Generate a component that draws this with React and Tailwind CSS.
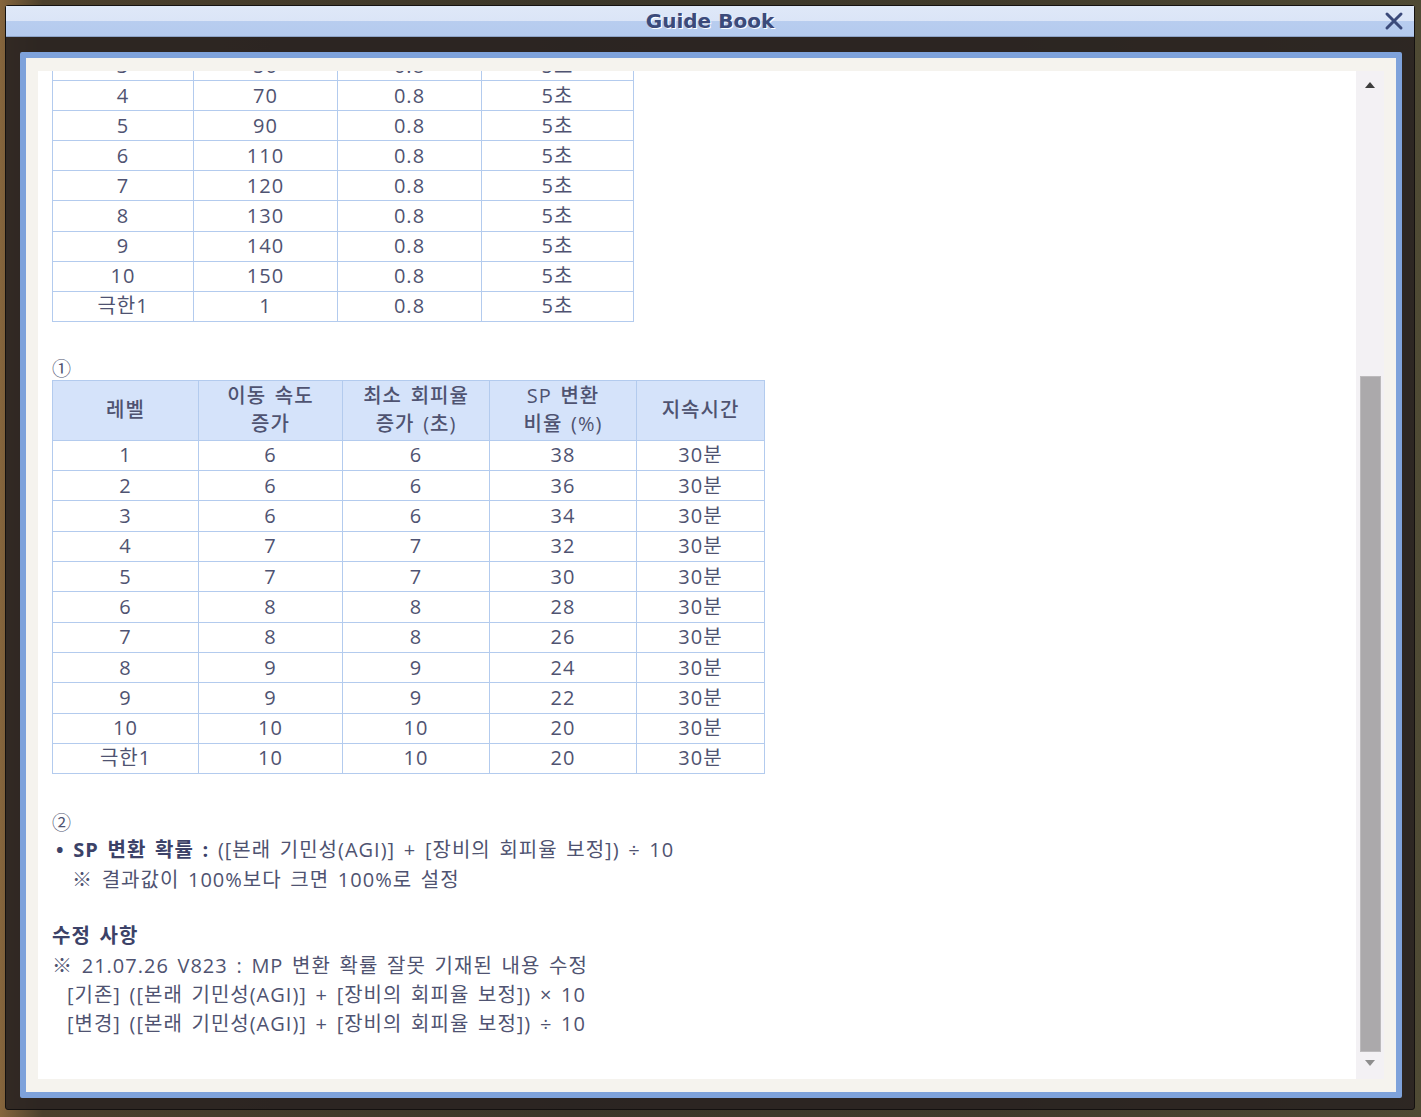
import React from 'react';

// Guide Book window: skill tables with a scrolled content pane

const table1 = [
  ['3', '50', '0.8', '5초'],
  ['4', '70', '0.8', '5초'],
  ['5', '90', '0.8', '5초'],
  ['6', '110', '0.8', '5초'],
  ['7', '120', '0.8', '5초'],
  ['8', '130', '0.8', '5초'],
  ['9', '140', '0.8', '5초'],
  ['10', '150', '0.8', '5초'],
  ['극한1', '1', '0.8', '5초'],
];

const table2 = [
  ['1', '6', '6', '38'],
  ['2', '6', '6', '36'],
  ['3', '6', '6', '34'],
  ['4', '7', '7', '32'],
  ['5', '7', '7', '30'],
  ['6', '8', '8', '28'],
  ['7', '8', '8', '26'],
  ['8', '9', '9', '24'],
  ['9', '9', '9', '22'],
  ['10', '10', '10', '20'],
  ['극한1', '10', '10', '20'],
];

const cell = 'border border-[#b3cbee] text-center align-middle p-0 leading-[24px]';
const head = 'border border-[#b3cbee] text-center align-middle p-0 font-medium leading-[28px]';

function CloseIcon() {
  return (
    <svg width="20" height="20" viewBox="0 0 20 20" fill="none">
      <path d="M3 3 L17 17 M17 3 L3 17" stroke="#3b4a7a" strokeWidth="3" strokeLinecap="round" />
    </svg>
  );
}

function Scrollbar() {
  return (
    <div className="w-[28px] shrink-0 bg-[#f3f1f4] flex flex-col items-center">
      <div className="h-[28px] w-full flex items-center justify-center">
        <div className="w-0 h-0 border-x-[5px] border-x-transparent border-b-[6px] border-b-[#3d3d3d]" />
      </div>
      <div className="h-[277px]" />
      <div className="w-[21px] h-[676px] bg-[#aba9ab] border border-[#bcbabc]" />
      <div className="h-[22px] w-full flex items-center justify-center">
        <div className="w-0 h-0 border-x-[5px] border-x-transparent border-t-[6px] border-t-[#8e8e8e]" />
      </div>
    </div>
  );
}

export default function App() {
  return (
    <div className="w-[1421px] h-[1117px] overflow-hidden pt-[5px] pl-[5px] bg-[linear-gradient(90deg,#86653c_0,#4b3f2c_3%,#3b3629_40%,#403a2b_70%,#4f4a34_100%)] font-['Open_Sans','Noto_Sans_CJK_KR',sans-serif] text-[#4f5371]">
      {/* window frame */}
      <div className="w-[1410px] h-[1105px] flex flex-col bg-[#2a2421]/90 border border-[#141110] rounded-[3px]">
        {/* title bar */}
        <div className="relative h-[31px] shrink-0 bg-[linear-gradient(#dfe8f8_0,#dbe5f7_50%,#b8cdef_50%,#b4caee_100%)] border-b border-[#8ea4c8] flex items-center justify-center">
          <span className="font-['DejaVu_Sans',sans-serif] font-bold text-[20px] text-[#3b4a7a] [text-shadow:1px_1px_0_#ffffff]">
            Guide Book
          </span>
          <div className="absolute right-[10px] top-[5px]">
            <CloseIcon />
          </div>
        </div>

        {/* panel */}
        <div className="mt-[15px] ml-[14px] mr-[12px] h-[1046px] border-[6px] border-[#7ea2db] rounded-[2px] bg-[#f5f3ee] pt-[13px] pl-[12px] pr-[12px] pb-[13px] flex">
          <div className="flex-1 bg-white overflow-hidden pl-[14px] text-[20px] tracking-[1px] [word-spacing:2.5px]">
            {/* table 1, scrolled partially out of view */}
            <table className="table-fixed border-collapse w-[582px] mt-[-21px]">
              <colgroup>
                <col className="w-[141px]" />
                <col className="w-[144px]" />
                <col className="w-[144px]" />
                <col className="w-[152px]" />
              </colgroup>
              <tbody>
                {table1.map((r, i) => (
                  <tr key={i} className="h-[30.1px]">
                    {r.map((v, j) => (
                      <td key={j} className={cell}>{v}</td>
                    ))}
                  </tr>
                ))}
              </tbody>
            </table>

            <div className="mt-[36px] h-[22px] leading-[22px] text-[19px]">①</div>

            {/* table 2 */}
            <table className="table-fixed border-collapse w-[713px]">
              <colgroup>
                <col className="w-[146px]" />
                <col className="w-[144px]" />
                <col className="w-[147px]" />
                <col className="w-[147px]" />
                <col className="w-[128px]" />
              </colgroup>
              <thead>
                <tr className="h-[60px] bg-[#d5e3fa]">
                  <th className={head}>레벨</th>
                  <th className={head}>이동 속도<br />증가</th>
                  <th className={head}>최소 회피율<br />증가 (초)</th>
                  <th className={head}>SP 변환<br />비율 (%)</th>
                  <th className={head}>지속시간</th>
                </tr>
              </thead>
              <tbody>
                {table2.map((r, i) => (
                  <tr key={i} className="h-[30.3px]">
                    {r.map((v, j) => (
                      <td key={j} className={cell}>{v}</td>
                    ))}
                    <td className={cell}>30분</td>
                  </tr>
                ))}
              </tbody>
            </table>

            <div className="mt-[37px]">
              <div className="h-[24px] leading-[24px] text-[19px]">②</div>
              <div className="h-[30px] leading-[30px] pl-[4px]">
                <span className="font-bold text-[#3c4268]">• SP 변환 확률 : </span>
                ([본래 기민성(AGI)] + [장비의 회피율 보정]) ÷ 10
              </div>
              <div className="h-[30px] leading-[30px] pl-[20px]">※ 결과값이 100%보다 크면 100%로 설정</div>
              <div className="h-[26px]" />
              <div className="h-[30px] leading-[30px] font-bold text-[#3c4268]">수정 사항</div>
              <div className="h-[29px] leading-[30px]">※ 21.07.26 V823 : MP 변환 확률 잘못 기재된 내용 수정</div>
              <div className="h-[29px] leading-[29px] pl-[15px]">[기존] ([본래 기민성(AGI)] + [장비의 회피율 보정]) × 10</div>
              <div className="h-[29px] leading-[29px] pl-[15px]">[변경] ([본래 기민성(AGI)] + [장비의 회피율 보정]) ÷ 10</div>
            </div>
          </div>
          <Scrollbar />
        </div>
      </div>
    </div>
  );
}
